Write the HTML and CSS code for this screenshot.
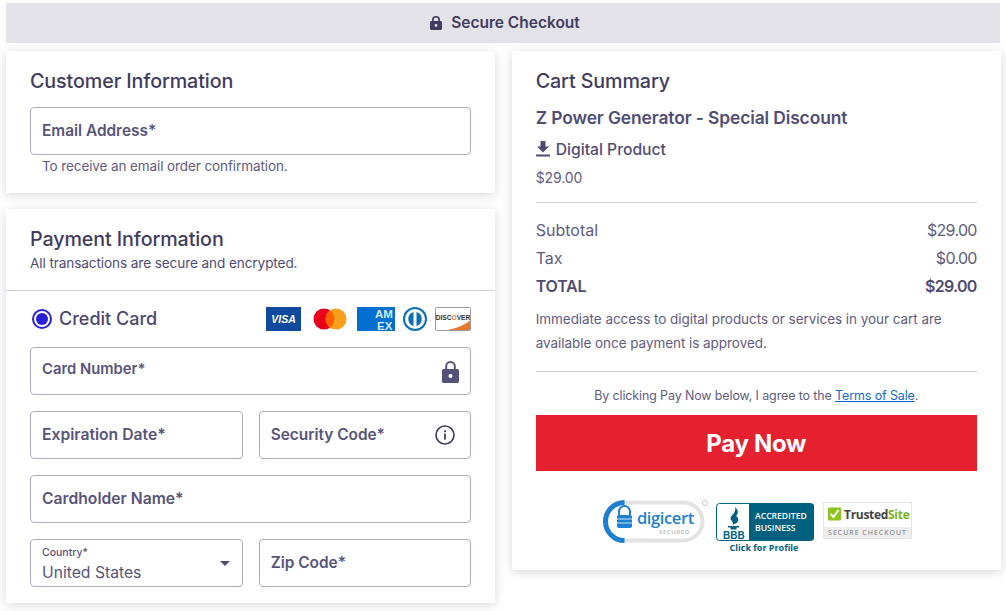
FILE: index.html
```html
<!DOCTYPE html>
<html lang="en">
<head>
<meta charset="utf-8">
<title>Secure Checkout</title>
<link rel="stylesheet" href="styles.css">
</head>
<body>
<header class="topbar">
  <svg class="top-lock" viewBox="0 0 12 14"><path fill-rule="evenodd" d="M2 5V3.800a4 3.800 0 0 1 8 0V5h.6c.8 0 1.400.6 1.400 1.400v6.200c0 .8-.6 1.400-1.400 1.400H1.400c-.8 0-1.400-.6-1.400-1.400V6.400C0 5.600.6 5 1.400 5zm1.700 0h4.600V3.800a2.300 2.200 0 0 0-4.600 0zM6 8a1.400 1.400 0 1 0 0 2.800A1.400 1.400 0 0 0 6 8z"/></svg>
  <span class="top-text">Secure Checkout</span>
</header>
<main class="columns">
  <div class="left">
    <section class="card customer">
      <h2>Customer Information</h2>
      <div class="field"><span class="label">Email Address*</span></div>
      <p class="hint">To receive an email order confirmation.</p>
    </section>
    <section class="card payment">
      <div class="pay-head">
        <h2>Payment Information</h2>
        <p class="sub">All transactions are secure and encrypted.</p>
      </div>
      <div class="pay-body">
        <div class="method">
          <span class="radio"><span class="dot"></span></span>
          <span class="method-name">Credit Card</span>
          <div class="brands">
            <svg class="b-visa" viewBox="0 0 35 24"><rect width="35" height="24" fill="#0f4a9e"/><text x="17.500" y="16" text-anchor="middle" class="visa-t">VISA</text></svg>
            <svg class="b-mc" viewBox="0 0 34 22"><circle cx="11" cy="11" r="10.500" fill="#eb001b"/><circle cx="23" cy="11" r="10.500" fill="#f79e1b"/><path d="M17 2.500a10.500 10.500 0 0 1 0 17a10.500 10.500 0 0 1 0-17z" fill="#ff5f00"/></svg>
            <svg class="b-amex" viewBox="0 0 38 24"><rect width="38" height="24" fill="#016fd0"/><text x="18" y="10.500" class="amex-t">AM</text><text x="20" y="22.500" class="amex-t">EX</text></svg>
            <svg class="b-diners" viewBox="0 0 26 24"><circle cx="13" cy="12" r="12" fill="#0a6fb5"/><circle cx="13" cy="12" r="10" fill="#fff"/><path d="M11.500 5v14a7.300 7.300 0 0 1 0-14zM14.500 5a7.300 7.300 0 0 1 0 14z" fill="#0a6fb5"/></svg>
            <svg class="b-disc" viewBox="0 0 36 24"><rect x=".5" y=".5" width="35" height="23" rx="1" fill="#fff" stroke="#9a9a9a"/><path d="M35 13.500V23H12c10-1.500 17-5 23-9.500z" fill="#e8792c"/><text x="18" y="12.500" text-anchor="middle" class="disc-t">DISC<tspan fill="#e8792c">O</tspan>VER</text></svg>
          </div>
        </div>
        <div class="field icon-field">
          <span class="label label-up">Card Number*</span>
          <svg class="field-lock" viewBox="0 0 17 22"><path fill-rule="evenodd" d="M3.200 8V5.300a5.300 5.300 0 0 1 10.600 0V8h1.400c1 0 1.800.8 1.800 1.800v10.400c0 1-.8 1.800-1.800 1.800H1.800C.8 22 0 21.200 0 20.200V9.800C0 8.800.8 8 1.800 8zm2 0h6.600V5.300a3.300 3.300 0 0 0-6.600 0zM8.500 13a2 2 0 1 0 0 4a2 2 0 0 0 0-4z"/></svg>
        </div>
        <div class="row">
          <div class="field"><span class="label label-wide">Expiration Date*</span></div>
          <div class="field icon-field">
            <span class="label">Security Code*</span>
            <svg class="info" viewBox="0 0 20 20"><circle cx="10" cy="10" r="9" fill="none" stroke="currentColor" stroke-width="1.600"/><rect x="9.100" y="8.600" width="1.800" height="6" fill="currentColor"/><rect x="9.100" y="5.300" width="1.800" height="1.900" fill="currentColor"/></svg>
          </div>
        </div>
        <div class="field"><span class="label label-wide">Cardholder Name*</span></div>
        <div class="row">
          <div class="field select">
            <div class="select-text"><span class="mini">Country*</span><span class="value">United States</span></div>
            <span class="caret"></span>
          </div>
          <div class="field"><span class="label">Zip Code*</span></div>
        </div>
      </div>
    </section>
  </div>
  <aside class="card cart">
    <h2>Cart Summary</h2>
    <h3>Z Power Generator - Special Discount</h3>
    <div class="digital">
      <svg class="dl" viewBox="0 0 14 16"><path d="M4.500 0h5v5.500H13L7 11.500L1 5.500h3.500zM0 13.500h14V15.500H0z"/></svg>
      <span>Digital Product</span>
    </div>
    <p class="price">$29.00</p>
    <hr>
    <div class="line"><span>Subtotal</span><span class="amt">$29.00</span></div>
    <div class="line"><span>Tax</span><span class="amt">$0.00</span></div>
    <div class="line total"><span>TOTAL</span><span class="amt">$29.00</span></div>
    <p class="access">Immediate access to digital products or services in your cart are available once payment is approved.</p>
    <hr class="hr2">
    <p class="terms">By clicking Pay Now below, I agree to the <a href="#">Terms of Sale</a>.</p>
    <button class="pay" type="button">Pay Now</button>
    <div class="seals">
      <svg class="s-digi" viewBox="0 0 106 44">
        <rect x="2.500" y="2.500" width="97" height="38" rx="19" fill="none" stroke="#e3e3e3" stroke-width="4"/>
        <path d="M21.500 2.500a19 19 0 0 0 0 38" fill="none" stroke="#1d7fd0" stroke-width="5"/>
        <path d="M16 15v-3.500a5.500 5.500 0 0 1 11 0V15" fill="none" stroke="#1d7fd0" stroke-width="2"/>
        <rect x="14" y="15" width="15" height="13" rx="2" fill="#1d7fd0"/>
        <path d="M14 19h15M14 23h15" stroke="#fff" stroke-width=".8"/>
        <text x="34" y="24" class="digi-t">digicert</text>
        <text x="56" y="33.500" class="digi-s">SECURED</text>
        <circle cx="102" cy="3" r="2.500" fill="none" stroke="#c8c8c8"/>
      </svg>
      <svg class="s-bbb" viewBox="0 0 98 50">
        <rect x=".5" y=".5" width="97" height="37" rx="3" fill="#fff" stroke="#00607f"/>
        <path d="M33 .5h62a3 3 0 0 1 3 3v31a3 3 0 0 1-3 3H33z" fill="#00607f"/>
        <path d="M19 4c3 3 4 6 1 9c3 2 3 5 .5 7l-4 2c2-3-2-4-2-6.500c0-3 6-5 4.500-11.500zM12 23h11v1.500h-2.500v2h-6v-2H12z" fill="#00607f"/>
        <text x="7" y="35.500" class="bbb-l">BBB</text>
        <text x="39" y="16" class="bbb-t">ACCREDITED</text>
        <text x="39" y="27.500" class="bbb-t">BUSINESS</text>
        <text x="48" y="48" text-anchor="middle" class="bbb-c">Click for Profile</text>
      </svg>
      <svg class="s-trust" viewBox="0 0 89 37">
        <rect x=".5" y=".5" width="88" height="36" fill="#fff" stroke="#e4e4e4"/>
        <rect x="1" y="25" width="87" height="11" fill="#eeeeee"/>
        <rect x="5" y="5.500" width="13" height="13" rx="1" fill="#8dc21f"/>
        <path d="M7.500 12l3 3l5-7" fill="none" stroke="#fff" stroke-width="2"/>
        <text x="21" y="16.500" class="ts-t">Trusted<tspan fill="#7cb518">Site</tspan></text>
        <text x="44.500" y="33" text-anchor="middle" class="ts-s">SECURE CHECKOUT</text>
      </svg>
    </div>
  </aside>
</main>
</body>
</html>
```
FILE: styles.css
```css
* { box-sizing: border-box; }
html, body { margin: 0; padding: 0; }
body {
  width: 1006px;
  height: 611px;
  overflow: hidden;
  background: #fff;
  font-family: Inter, "Open Sans", sans-serif;
  color: #4f4c72;
  padding: 3px 0 0 6px;
}
.topbar {
  height: 40px;
  width: 994px;
  background: #e3e2e8;
  display: flex;
  align-items: center;
  justify-content: center;
  gap: 9px;
  padding-left: 4px;
  font-size: 15.500px;
  font-weight: 600;
  color: #3f3c5f;
}
.top-text { margin-top: -1px; }
.top-lock { width: 12px; height: 14px; fill: #3f3c5f; }
.columns { display: flex; gap: 16.300px; margin-top: 8px; align-items: flex-start; }
.left { flex: none; width: 489.400px; display: flex; flex-direction: column; gap: 16px; }
.card { background: #fff; box-shadow: 0 2px 10px rgba(60, 60, 80, .2); }
h2 { margin: 0; font-size: 19.700px; line-height: 24px; font-weight: 500; color: #3f3c5f; letter-spacing: -.1px; }
.customer { height: 142px; padding: 18px 24px 0; }
.customer h2 { margin-bottom: 14px; }
.field {
  height: 48px;
  border: 1px solid #aeabc4;
  border-radius: 4px;
  background: #fff;
  padding: 0 11px;
  display: flex;
  align-items: center;
  flex: 1 1 0;
}
.label { font-size: 15.400px; font-weight: 600; color: #57547a; margin-top: -2px; }
.label-up { margin-top: -4px; font-size: 14.800px; }
.label-wide { font-size: 15.700px; }
.hint { margin: 2px 0 0 12px; font-size: 13.500px; line-height: 18px; color: #5f5c80; letter-spacing: -.1px; }
.payment { height: 394px; }
.pay-head { padding: 18px 24px 0; height: 82px; border-bottom: 1px solid #cfcddc; }
.sub { margin: 3px 0 0; font-size: 13.600px; line-height: 18px; color: #4f4c72; letter-spacing: -.1px; }
.pay-body { padding: 15px 24px 0; display: flex; flex-direction: column; gap: 16px; }
.method { display: flex; align-items: center; height: 25px; }
.radio { width: 20px; height: 20px; margin-left: 2px; border: 2px solid #2a1fd6; border-radius: 50%; display: flex; align-items: center; justify-content: center; }
.dot { width: 12px; height: 12px; border-radius: 50%; background: #2a1fd6; }
.method-name { margin-left: 7px; font-size: 18px; font-weight: 500; color: #4a4770; }
.brands { margin-left: auto; display: flex; align-items: center; }
.brands svg { display: block; height: 24px; }
.b-visa { width: 35px; }
.b-mc { width: 34px; margin-left: 12px; height: 22px !important; }
.b-amex { width: 38px; margin-left: 10px; }
.b-diners { width: 26px; margin-left: 7px; }
.b-disc { width: 36px; margin-left: 7px; }
.visa-t { font: italic 700 10.500px "Liberation Sans", sans-serif; fill: #fff; }
.amex-t { font: 700 11.500px "Liberation Sans", sans-serif; fill: #d6ebfa; }
.disc-t { font: 700 6.600px "Liberation Sans", sans-serif; fill: #333; }
.pay-body > .field { flex: none; }
.icon-field { justify-content: space-between; }
.field-lock { width: 17px; height: 22px; fill: #54517a; margin-top: 2px; }
.info { width: 20px; height: 20px; color: #3f3c5f; margin-right: 4px; }
.row { display: flex; gap: 16px; }
.select { justify-content: space-between; }
.select-text { display: flex; flex-direction: column; }
.mini { font-size: 10.500px; line-height: 13px; font-weight: 500; color: #57547a; margin-top: 3px; }
.value { font-size: 15.700px; line-height: 22px; color: #57547a; margin-top: 3px; }
.caret { width: 0; height: 0; border-left: 5px solid transparent; border-right: 5px solid transparent; border-top: 5px solid #4f4c72; margin-right: 1px; }
.cart { flex: none; width: 489px; height: 519px; padding: 18px 24px 0; }
h3 { margin: 13px 0 0; font-size: 17.400px; line-height: 24px; font-weight: 600; color: #504d75; letter-spacing: -.1px; }
.digital { display: flex; align-items: center; gap: 6px; margin-top: 7px; height: 24px; font-size: 15.700px; font-weight: 500; color: #504d75; }
.dl { width: 14px; height: 16px; fill: #504d75; }
.price { margin: 7px 0 0; font-size: 14px; line-height: 20px; color: #5f5c80; letter-spacing: -.1px; }
hr { border: 0; border-top: 1px solid #cfcddc; margin: 14px 0 0; }
.line { display: flex; justify-content: space-between; font-size: 16px; line-height: 28px; color: #5f5c80; }
.amt { letter-spacing: -.7px; }
hr + .line { margin-top: 13px; }
.total { font-weight: 600; color: #4f4c72; letter-spacing: -.2px; }
.access { margin: 7px 0 0; font-size: 13.500px; line-height: 24px; color: #5f5c80; letter-spacing: -.05px; }
.hr2 { margin-top: 16px; }
.terms { margin: 15px 0 0; font-size: 12.450px; line-height: 18px; text-align: center; color: #5f5c80; letter-spacing: -.1px; }
.terms a { color: #1468c8; }
.pay {
  display: block;
  width: 100%;
  height: 56px;
  margin-top: 10px;
  border: 0;
  background: #e5202f;
  color: #fff;
  font-family: inherit;
  font-size: 24px;
  font-weight: 700;
  letter-spacing: -.3px;
}
.seals { display: flex; justify-content: center; align-items: flex-start; margin-top: 32px; padding-left: 2px; }
.s-digi { width: 106px; height: 44px; margin-top: -3px; }
.s-bbb { width: 98px; height: 50px; margin-left: 7px; }
.s-trust { width: 89px; height: 37px; margin-left: 9px; margin-top: -1px; }
.digi-t { font: 600 16.500px "Open Sans", sans-serif; fill: #1d7fd0; letter-spacing: -.4px; }
.digi-s { font: 600 6px "Open Sans", sans-serif; fill: #b5b5b5; letter-spacing: .6px; }
.bbb-l { font: 700 10px "Liberation Sans", sans-serif; fill: #00607f; }
.bbb-t { font: 600 8.600px "Open Sans", sans-serif; fill: #fff; }
.bbb-c { font: 700 9px "Open Sans", sans-serif; fill: #00607f; }
.ts-t { font: 700 12px "Open Sans", sans-serif; fill: #444; letter-spacing: -.3px; }
.ts-s { font: 500 7px "Open Sans", sans-serif; fill: #777; letter-spacing: 1px; }
```
